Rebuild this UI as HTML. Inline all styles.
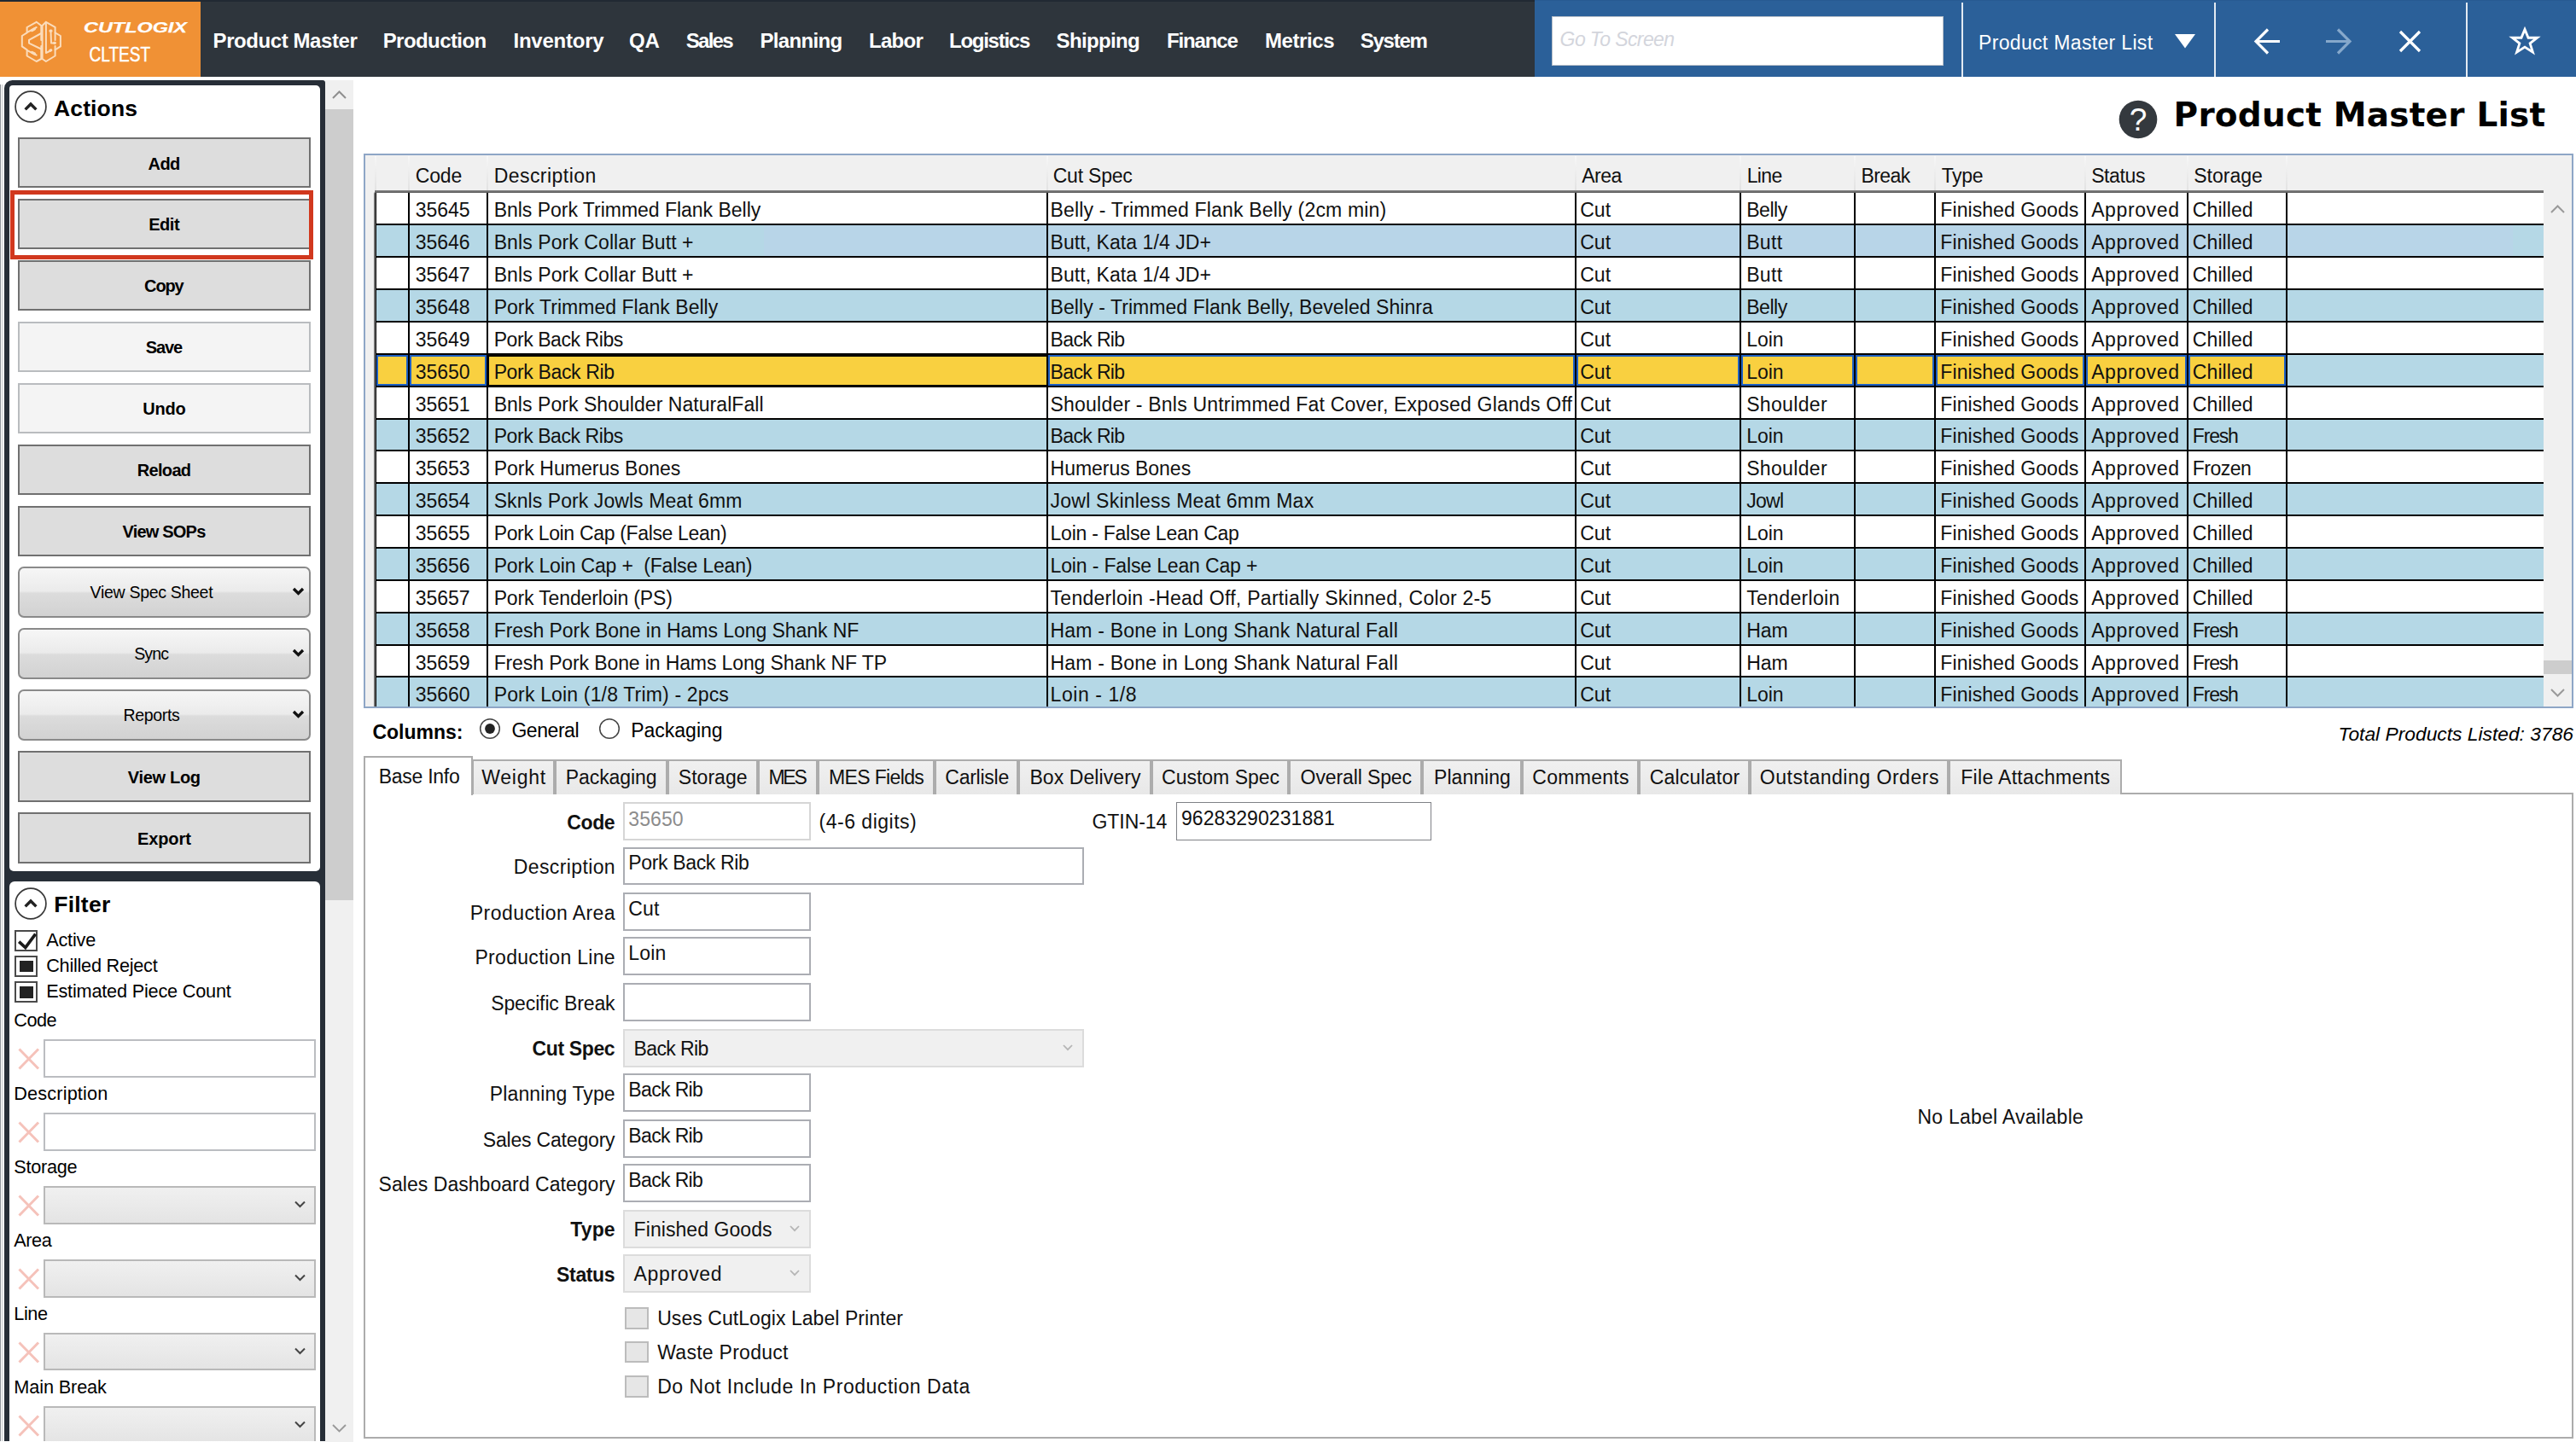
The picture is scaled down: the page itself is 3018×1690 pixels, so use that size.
<!DOCTYPE html>
<html lang="en"><head><meta charset="utf-8"><title>Product Master List</title>
<style>
html,body{margin:0;padding:0;background:#fff;}
body{width:3018px;height:1690px;overflow:hidden;position:relative;font-family:"Liberation Sans", sans-serif;font-size:23px;color:#000;}
div{position:absolute;box-sizing:border-box;white-space:pre;}
svg{position:absolute;overflow:visible;}

.nav{color:#fff;font-weight:bold;font-size:24px;line-height:24px;}
.btn{background:#ddd;border:2px solid #707070;text-align:center;font-weight:bold;font-size:20px;}
.btn.dis{background:#f4f4f4;border-color:#b9bcbf;}
.dd{border:2px solid #8a8a8a;border-radius:7px;background:linear-gradient(#f6f6f6 0%,#ebebeb 48%,#dcdcdc 52%,#d2d2d2 100%);}
.tb{background:#fff;border:2px solid #abadb3;}
.cb{background:linear-gradient(#efefef,#e4e4e4);border:2px solid #acacac;}
.tab{background:linear-gradient(#f0f0f0,#e8e8e8);border:2px solid #acacac;border-bottom:none;}

</style></head><body>
<div style="left:0.00px;top:0.00px;width:3018.00px;height:90.00px;background:#2e353c;"></div><div style="left:0.00px;top:0.00px;width:1797.50px;height:1.70px;background:#212933;"></div><div style="left:0.00px;top:1.90px;width:234.60px;height:88.00px;background:#f09135;"></div><div style="left:1797.50px;top:0.00px;width:1220.50px;height:90.00px;background:#2b6099;"></div><div style="left:1797.50px;top:0.00px;width:1220.50px;height:1.20px;background:#275a92;"></div><svg style="left:24.5px;top:24.5px" width="47" height="48" viewBox="0 0 47 48" fill="none" stroke="#fbdcbb" stroke-width="2" stroke-linejoin="round" stroke-linecap="round">
<path d="M17.7 0.8 L6.6 7 L6.6 13.3 L0.8 17 L0.8 29.4 L6.6 33.3 L6.6 40.5 L17.7 47 L23.3 44 L23.3 29 M23.3 22 L23.3 5 L17.7 0.8"/>
<path d="M17.7 7 L7 12.8 M23.3 14 L9 21.8 L9 25.6 L23.3 32.5 M7 34.2 L17.7 39.6"/>
<path d="M15.5 8.8 L12.5 10.6 M15.5 38 L12.5 36.4" stroke-width="3.2"/>
<path d="M28.9 0.8 L39.6 6.8 L39.6 13.3 L45.9 17 L45.9 29.4 L39.6 33.3 L39.6 40.5 L28.9 47 L24.6 44 L24.6 5 L28.9 0.8"/>
<path d="M28.9 2.5 L28.9 37 L34.5 34.3 M34.5 11.5 L35 25.5 L39 25.5 M39.6 13.3 L39.6 22 M39.6 29 L39.6 33.3"/>
<path d="M34 11.2 L35 11.2 M38.6 25.3 L39.4 25.3 M33.8 34.2 L34.8 33.8" stroke-width="3.2"/>
</svg><svg style="left:0;top:0" width="240" height="90"><text x="98" y="38" fill="#fff" font-family="Liberation Sans, sans-serif" font-weight="bold" font-style="italic" font-size="17.4" stroke="#fff" stroke-width="0.25" textLength="121" lengthAdjust="spacingAndGlyphs">CUTLOGIX</text>
<text x="104.6" y="72.3" fill="#fff" font-family="Liberation Sans, sans-serif" font-size="24.3" stroke="#fff" stroke-width="0.5" textLength="71.5" lengthAdjust="spacingAndGlyphs">CLTEST</text></svg><div style="top:35.98px;font-size:24px;line-height:24px;color:#fff;font-weight:bold;letter-spacing:-0.423px;left:249.60px;">Product Master</div><div style="top:35.98px;font-size:24px;line-height:24px;color:#fff;font-weight:bold;letter-spacing:-0.573px;left:448.70px;">Production</div><div style="top:35.98px;font-size:24px;line-height:24px;color:#fff;font-weight:bold;letter-spacing:-0.241px;left:601.50px;">Inventory</div><div style="top:35.98px;font-size:24px;line-height:24px;color:#fff;font-weight:bold;letter-spacing:-0.2px;left:737.00px;">QA</div><div style="top:35.98px;font-size:24px;line-height:24px;color:#fff;font-weight:bold;letter-spacing:-1.705px;left:803.70px;">Sales</div><div style="top:35.98px;font-size:24px;line-height:24px;color:#fff;font-weight:bold;letter-spacing:-0.635px;left:890.40px;">Planning</div><div style="top:35.98px;font-size:24px;line-height:24px;color:#fff;font-weight:bold;letter-spacing:-0.718px;left:1018.00px;">Labor</div><div style="top:35.98px;font-size:24px;line-height:24px;color:#fff;font-weight:bold;letter-spacing:-1.257px;left:1112.00px;">Logistics</div><div style="top:35.98px;font-size:24px;line-height:24px;color:#fff;font-weight:bold;letter-spacing:-0.665px;left:1237.60px;">Shipping</div><div style="top:35.98px;font-size:24px;line-height:24px;color:#fff;font-weight:bold;letter-spacing:-1.151px;left:1367.00px;">Finance</div><div style="top:35.98px;font-size:24px;line-height:24px;color:#fff;font-weight:bold;letter-spacing:-0.424px;left:1482.00px;">Metrics</div><div style="top:35.98px;font-size:24px;line-height:24px;color:#fff;font-weight:bold;letter-spacing:-1.278px;left:1593.80px;">System</div><div style="left:1818.20px;top:18.70px;width:459.20px;height:58.60px;background:#fff;border:1px solid #b9c0c9;"></div><div style="top:34.83px;font-size:23px;line-height:23px;color:#d3d5dc;letter-spacing:-0.598px;left:1827.60px;font-style:italic;">Go To Screen</div><div style="left:2298.30px;top:2.50px;width:2.00px;height:87.50px;background:#e3eaf2;"></div><div style="left:2593.60px;top:2.50px;width:2.00px;height:87.50px;background:#e3eaf2;"></div><div style="left:2889.40px;top:2.50px;width:2.00px;height:87.50px;background:#e3eaf2;"></div><div style="top:39.13px;font-size:23px;line-height:23px;color:#fff;letter-spacing:0.33px;left:2318.00px;">Product Master List</div><svg style="left:2548px;top:40.2px" width="24" height="17"><path d="M0 0H24L12 16.5Z" fill="#fff"/></svg><svg style="left:2640px;top:33px" width="32" height="32" fill="none" stroke="#fff" stroke-width="3.2"><path d="M31 15.5H3M17 1.5L3 15.5L17 29.5"/></svg><svg style="left:2724px;top:33px" width="32" height="32" fill="none" stroke="#86a8cb" stroke-width="3.2"><path d="M1 15.5H29M15 1.5L29 15.5L15 29.5"/></svg><svg style="left:2811px;top:36px" width="25" height="25" fill="none" stroke="#fff" stroke-width="3.2"><path d="M1 1L24 24M24 1L1 24"/></svg><svg style="left:2940.5px;top:32px" width="34" height="32" viewBox="0 0 36 34" fill="none" stroke="#fff" stroke-width="3"><path d="M18 2.5L22.3 13H33.5L24.5 20L28 31L18 24.5L8 31L11.5 20L2.5 13H13.7Z" stroke-linejoin="miter"/></svg><div style="left:0.00px;top:99.00px;width:0.80px;height:1600.00px;background:#8d9297;"></div><div style="left:1.90px;top:99.00px;width:0.90px;height:1600.00px;background:#c4c6c8;"></div><div style="left:4.60px;top:94.20px;width:376.00px;height:1620.00px;background:#272e37;border-radius:9.5px 3px 0 0;"></div><div style="left:10.50px;top:100.40px;width:364.00px;height:921.00px;background:#fff;border-radius:4px 5px 5px 5px;"></div><div style="left:10.50px;top:1033.30px;width:364.00px;height:700.00px;background:#fff;border-radius:6px 6px 0 0;"></div><div style="left:380.50px;top:94.00px;width:33.50px;height:1596.00px;background:#f0f0f0;"></div><div style="left:380.50px;top:128.00px;width:33.50px;height:927.00px;background:#cdcdcd;"></div><svg style="left:389px;top:106px" width="17" height="10" fill="none" stroke="#8f8f8f" stroke-width="2"><path d="M1 9L8.5 1.5L16 9"/></svg><svg style="left:389px;top:1669px" width="17" height="10" fill="none" stroke="#9a9a9a" stroke-width="1.9"><path d="M1 1L8.5 8.5L16 1"/></svg><svg style="left:15.5px;top:105.1px" width="40" height="40" fill="none"><circle cx="20" cy="20" r="17.9" stroke="#383838" stroke-width="1.7" fill="#fff"/><path d="M13.6 23.4L20 17L26.4 23.4" stroke="#222" stroke-width="3.4"/></svg><div style="top:113.57px;font-size:26.5px;line-height:26.5px;color:#000;font-weight:bold;letter-spacing:0.135px;left:63.00px;">Actions</div><svg style="left:15.5px;top:1038.8px" width="40" height="40" fill="none"><circle cx="20" cy="20" r="17.9" stroke="#383838" stroke-width="1.7" fill="#fff"/><path d="M13.6 23.4L20 17L26.4 23.4" stroke="#222" stroke-width="3.4"/></svg><div style="top:1047.27px;font-size:26.5px;line-height:26.5px;color:#000;font-weight:bold;letter-spacing:0.221px;left:63.30px;">Filter</div><div class="btn" style="left:20.60px;top:161.00px;width:343.50px;height:59.40px;"></div><div style="top:181.57px;font-size:20px;line-height:20px;color:#000;font-weight:bold;letter-spacing:-0.495px;left:173.45px;">Add</div><div class="btn" style="left:20.60px;top:232.92px;width:343.50px;height:59.40px;"></div><div style="top:253.49px;font-size:20px;line-height:20px;color:#000;font-weight:bold;letter-spacing:-0.494px;left:174.25px;">Edit</div><div class="btn" style="left:20.60px;top:304.84px;width:343.50px;height:59.40px;"></div><div style="top:325.41px;font-size:20px;line-height:20px;color:#000;font-weight:bold;letter-spacing:-1.133px;left:169.10px;">Copy</div><div class="btn dis" style="left:20.60px;top:376.76px;width:343.50px;height:59.40px;"></div><div style="top:397.33px;font-size:20px;line-height:20px;color:#000;font-weight:bold;letter-spacing:-1.073px;left:170.65px;">Save</div><div class="btn dis" style="left:20.60px;top:448.68px;width:343.50px;height:59.40px;"></div><div style="top:469.25px;font-size:20px;line-height:20px;color:#000;font-weight:bold;letter-spacing:-0.198px;left:167.15px;">Undo</div><div class="btn" style="left:20.60px;top:520.60px;width:343.50px;height:59.40px;"></div><div style="top:541.17px;font-size:20px;line-height:20px;color:#000;font-weight:bold;letter-spacing:-0.678px;left:160.75px;">Reload</div><div class="btn" style="left:20.60px;top:592.52px;width:343.50px;height:59.40px;"></div><div style="top:613.09px;font-size:20px;line-height:20px;color:#000;font-weight:bold;letter-spacing:-0.793px;left:143.50px;">View SOPs</div><div class="dd" style="left:20.60px;top:664.44px;width:343.50px;height:59.40px;"></div><div style="top:685.23px;font-size:19.5px;line-height:19.5px;color:#000;letter-spacing:-0.297px;left:105.60px;">View Spec Sheet</div><svg style="left:343.2px;top:689.4px" width="13" height="9" fill="none" stroke="#111" stroke-width="3.3"><path d="M1 1L6.5 6.5L12 1"/></svg><div class="dd" style="left:20.60px;top:736.36px;width:343.50px;height:59.40px;"></div><div style="top:757.15px;font-size:19.5px;line-height:19.5px;color:#000;letter-spacing:-0.853px;left:157.20px;">Sync</div><svg style="left:343.2px;top:761.4px" width="13" height="9" fill="none" stroke="#111" stroke-width="3.3"><path d="M1 1L6.5 6.5L12 1"/></svg><div class="dd" style="left:20.60px;top:808.28px;width:343.50px;height:59.40px;"></div><div style="top:829.07px;font-size:19.5px;line-height:19.5px;color:#000;letter-spacing:-0.314px;left:144.40px;">Reports</div><svg style="left:343.2px;top:833.3px" width="13" height="9" fill="none" stroke="#111" stroke-width="3.3"><path d="M1 1L6.5 6.5L12 1"/></svg><div class="btn" style="left:20.60px;top:880.20px;width:343.50px;height:59.40px;"></div><div style="top:900.77px;font-size:20px;line-height:20px;color:#000;font-weight:bold;letter-spacing:-0.289px;left:149.70px;">View Log</div><div class="btn" style="left:20.60px;top:952.12px;width:343.50px;height:59.40px;"></div><div style="top:972.69px;font-size:20px;line-height:20px;color:#000;font-weight:bold;letter-spacing:-0.089px;left:160.95px;">Export</div><div style="left:12.10px;top:223.00px;width:355.10px;height:80.70px;border:5px solid #d1381e;"></div><div style="left:16.50px;top:1090.00px;width:27.70px;height:25.20px;background:#fff;border:2px solid #4a4a4a;"></div><svg style="left:16.5px;top:1090px" width="28" height="26" fill="none" stroke="#1a1a1a" stroke-width="3.6"><path d="M5.2 13.6L12.8 20.6L24.6 4.6"/></svg><div style="top:1091.23px;font-size:21.7px;line-height:21.7px;color:#000;letter-spacing:-0.192px;left:54.20px;">Active</div><div style="left:16.50px;top:1120.00px;width:27.70px;height:25.20px;background:#fff;border:2px solid #4a4a4a;"></div><div style="left:22.50px;top:1125.60px;width:16.00px;height:13.80px;background:#222;"></div><div style="top:1121.03px;font-size:21.7px;line-height:21.7px;color:#000;letter-spacing:-0.255px;left:54.20px;">Chilled Reject</div><div style="left:16.50px;top:1150.20px;width:27.70px;height:25.20px;background:#fff;border:2px solid #4a4a4a;"></div><div style="left:22.50px;top:1155.80px;width:16.00px;height:13.80px;background:#222;"></div><div style="top:1150.93px;font-size:21.7px;line-height:21.7px;color:#000;letter-spacing:-0.2px;left:54.20px;">Estimated Piece Count</div><div style="top:1185.23px;font-size:21.7px;line-height:21.7px;color:#000;letter-spacing:-0.553px;left:16.30px;">Code</div><svg style="left:21.2px;top:1228.4px" width="26" height="26" fill="none" stroke="#f5c2ba" stroke-width="3"><path d="M1.5 1.5L24 24.5M24 1.5L1.5 24.5"/></svg><div style="left:50.60px;top:1218.00px;width:319.60px;height:44.90px;background:#fff;border:2px solid #bbbdc1;"></div><div style="top:1271.13px;font-size:21.7px;line-height:21.7px;color:#000;letter-spacing:0.152px;left:16.30px;">Description</div><svg style="left:21.2px;top:1314.3px" width="26" height="26" fill="none" stroke="#f5c2ba" stroke-width="3"><path d="M1.5 1.5L24 24.5M24 1.5L1.5 24.5"/></svg><div style="left:50.60px;top:1303.90px;width:319.60px;height:44.90px;background:#fff;border:2px solid #bbbdc1;"></div><div style="top:1357.03px;font-size:21.7px;line-height:21.7px;color:#000;letter-spacing:-0.295px;left:16.30px;">Storage</div><svg style="left:21.2px;top:1400.2px" width="26" height="26" fill="none" stroke="#f5c2ba" stroke-width="3"><path d="M1.5 1.5L24 24.5M24 1.5L1.5 24.5"/></svg><div style="left:50.60px;top:1389.80px;width:319.60px;height:44.90px;background:linear-gradient(#f0f0f0,#e4e4e4);border:2px solid #b9b9b9;"></div><svg style="left:345px;top:1407.3px" width="13" height="9" fill="none" stroke="#444" stroke-width="2"><path d="M1 1.5L6.5 7L12 1.5"/></svg><div style="top:1442.93px;font-size:21.7px;line-height:21.7px;color:#000;letter-spacing:-0.438px;left:16.30px;">Area</div><svg style="left:21.2px;top:1486.1px" width="26" height="26" fill="none" stroke="#f5c2ba" stroke-width="3"><path d="M1.5 1.5L24 24.5M24 1.5L1.5 24.5"/></svg><div style="left:50.60px;top:1475.70px;width:319.60px;height:44.90px;background:linear-gradient(#f0f0f0,#e4e4e4);border:2px solid #b9b9b9;"></div><svg style="left:345px;top:1493.2px" width="13" height="9" fill="none" stroke="#444" stroke-width="2"><path d="M1 1.5L6.5 7L12 1.5"/></svg><div style="top:1528.83px;font-size:21.7px;line-height:21.7px;color:#000;letter-spacing:-0.439px;left:16.30px;">Line</div><svg style="left:21.2px;top:1572.0px" width="26" height="26" fill="none" stroke="#f5c2ba" stroke-width="3"><path d="M1.5 1.5L24 24.5M24 1.5L1.5 24.5"/></svg><div style="left:50.60px;top:1561.60px;width:319.60px;height:44.90px;background:linear-gradient(#f0f0f0,#e4e4e4);border:2px solid #b9b9b9;"></div><svg style="left:345px;top:1579.1px" width="13" height="9" fill="none" stroke="#444" stroke-width="2"><path d="M1 1.5L6.5 7L12 1.5"/></svg><div style="top:1614.73px;font-size:21.7px;line-height:21.7px;color:#000;letter-spacing:-0.121px;left:16.30px;">Main Break</div><svg style="left:21.2px;top:1657.9px" width="26" height="26" fill="none" stroke="#f5c2ba" stroke-width="3"><path d="M1.5 1.5L24 24.5M24 1.5L1.5 24.5"/></svg><div style="left:50.60px;top:1647.50px;width:319.60px;height:44.90px;background:linear-gradient(#f0f0f0,#e4e4e4);border:2px solid #b9b9b9;"></div><svg style="left:345px;top:1665.0px" width="13" height="9" fill="none" stroke="#444" stroke-width="2"><path d="M1 1.5L6.5 7L12 1.5"/></svg><svg style="left:2482px;top:116.5px" width="46" height="46"><circle cx="23" cy="23" r="22.3" fill="#34393e"/></svg><div style="top:122.28px;font-size:37px;line-height:37px;color:#fff;left:2005.00px;width:1000px;text-align:center;">?</div><div style="top:114.99px;font-size:39px;line-height:39px;color:#000;font-weight:bold;letter-spacing:0.2px;left:2546.60px;font-family:'DejaVu Sans','Liberation Sans',sans-serif;">Product Master List</div><div style="left:426.40px;top:180.30px;width:2588.20px;height:649.30px;background:#fff;border:2px solid #8ea6c6;"></div><div style="left:428.40px;top:182.30px;width:2584.20px;height:41.00px;background:#f0f0f0;"></div><div style="left:428.40px;top:182.30px;width:10.00px;height:645.30px;background:#f0f0f0;"></div><div style="left:439.35px;top:183.30px;width:2.00px;height:40.00px;background:linear-gradient(#f7f7f7,#e2e2e2);"></div><div style="left:478.35px;top:183.30px;width:2.00px;height:40.00px;background:linear-gradient(#f7f7f7,#e2e2e2);"></div><div style="top:195.43px;font-size:23px;line-height:23px;color:#111;letter-spacing:-0.095px;left:486.65px;">Code</div><div style="left:570.35px;top:183.30px;width:2.00px;height:40.00px;background:linear-gradient(#f7f7f7,#e2e2e2);"></div><div style="top:195.43px;font-size:23px;line-height:23px;color:#111;letter-spacing:0.455px;left:578.65px;">Description</div><div style="left:1226.35px;top:183.30px;width:2.00px;height:40.00px;background:linear-gradient(#f7f7f7,#e2e2e2);"></div><div style="top:195.43px;font-size:23px;line-height:23px;color:#111;letter-spacing:-0.201px;left:1233.65px;">Cut Spec</div><div style="left:1844.85px;top:183.30px;width:2.00px;height:40.00px;background:linear-gradient(#f7f7f7,#e2e2e2);"></div><div style="top:195.43px;font-size:23px;line-height:23px;color:#111;letter-spacing:-0.465px;left:1853.15px;">Area</div><div style="left:2038.35px;top:183.30px;width:2.00px;height:40.00px;background:linear-gradient(#f7f7f7,#e2e2e2);"></div><div style="top:195.43px;font-size:23px;line-height:23px;color:#111;letter-spacing:-0.628px;left:2046.65px;">Line</div><div style="left:2172.15px;top:183.30px;width:2.00px;height:40.00px;background:linear-gradient(#f7f7f7,#e2e2e2);"></div><div style="top:195.43px;font-size:23px;line-height:23px;color:#111;letter-spacing:-0.548px;left:2180.45px;">Break</div><div style="left:2266.35px;top:183.30px;width:2.00px;height:40.00px;background:linear-gradient(#f7f7f7,#e2e2e2);"></div><div style="top:195.43px;font-size:23px;line-height:23px;color:#111;letter-spacing:-0.325px;left:2274.65px;">Type</div><div style="left:2441.85px;top:183.30px;width:2.00px;height:40.00px;background:linear-gradient(#f7f7f7,#e2e2e2);"></div><div style="top:195.43px;font-size:23px;line-height:23px;color:#111;letter-spacing:-0.384px;left:2450.15px;">Status</div><div style="left:2561.85px;top:183.30px;width:2.00px;height:40.00px;background:linear-gradient(#f7f7f7,#e2e2e2);"></div><div style="top:195.43px;font-size:23px;line-height:23px;color:#111;letter-spacing:0.023px;left:2570.15px;">Storage</div><div style="left:2677.65px;top:183.30px;width:2.00px;height:40.00px;background:linear-gradient(#f7f7f7,#e2e2e2);"></div><div style="left:439.00px;top:222.70px;width:2540.80px;height:3.30px;background:linear-gradient(#8a8a8a,#555);"></div><div style="left:440.00px;top:225.50px;width:2539.80px;height:37.00px;background:#fff;"></div><div style="left:440.00px;top:262.00px;width:2539.80px;height:2.00px;background:#000;"></div><div style="top:235.33px;font-size:23px;line-height:23px;color:#111;left:486.65px;">35645</div><div style="top:235.33px;font-size:23px;line-height:23px;color:#111;letter-spacing:-0.019px;left:578.65px;">Bnls Pork Trimmed Flank Belly</div><div style="top:235.33px;font-size:23px;line-height:23px;color:#111;letter-spacing:0.18px;left:1230.55px;">Belly - Trimmed Flank Belly (2cm min)</div><div style="top:235.33px;font-size:23px;line-height:23px;color:#111;letter-spacing:0.102px;left:1851.15px;">Cut</div><div style="top:235.33px;font-size:23px;line-height:23px;color:#111;letter-spacing:-0.44px;left:2046.15px;">Belly</div><div style="top:235.33px;font-size:23px;line-height:23px;color:#111;letter-spacing:0.07px;left:2273.35px;">Finished Goods</div><div style="top:235.33px;font-size:23px;line-height:23px;color:#111;letter-spacing:0.619px;left:2450.15px;">Approved</div><div style="top:235.33px;font-size:23px;line-height:23px;color:#111;letter-spacing:0.079px;left:2568.85px;">Chilled</div><div style="left:440.00px;top:263.50px;width:2539.80px;height:37.00px;background:#b5d8e6;"></div><div style="left:895.00px;top:263.50px;width:2049.00px;height:37.00px;background:#b8d5e8;"></div><div style="left:440.00px;top:300.00px;width:2539.80px;height:2.00px;background:#000;"></div><div style="top:273.20px;font-size:23px;line-height:23px;color:#111;left:486.65px;">35646</div><div style="top:273.20px;font-size:23px;line-height:23px;color:#111;letter-spacing:0.086px;left:578.65px;">Bnls Pork Collar Butt +</div><div style="top:273.20px;font-size:23px;line-height:23px;color:#111;letter-spacing:0.058px;left:1230.55px;">Butt, Kata 1/4 JD+</div><div style="top:273.20px;font-size:23px;line-height:23px;color:#111;letter-spacing:0.102px;left:1851.15px;">Cut</div><div style="top:273.20px;font-size:23px;line-height:23px;color:#111;letter-spacing:0.393px;left:2046.15px;">Butt</div><div style="top:273.20px;font-size:23px;line-height:23px;color:#111;letter-spacing:0.07px;left:2273.35px;">Finished Goods</div><div style="top:273.20px;font-size:23px;line-height:23px;color:#111;letter-spacing:0.619px;left:2450.15px;">Approved</div><div style="top:273.20px;font-size:23px;line-height:23px;color:#111;letter-spacing:0.079px;left:2568.85px;">Chilled</div><div style="left:440.00px;top:301.50px;width:2539.80px;height:37.00px;background:#fff;"></div><div style="left:440.00px;top:338.00px;width:2539.80px;height:2.00px;background:#000;"></div><div style="top:311.07px;font-size:23px;line-height:23px;color:#111;left:486.65px;">35647</div><div style="top:311.07px;font-size:23px;line-height:23px;color:#111;letter-spacing:0.086px;left:578.65px;">Bnls Pork Collar Butt +</div><div style="top:311.07px;font-size:23px;line-height:23px;color:#111;letter-spacing:0.058px;left:1230.55px;">Butt, Kata 1/4 JD+</div><div style="top:311.07px;font-size:23px;line-height:23px;color:#111;letter-spacing:0.102px;left:1851.15px;">Cut</div><div style="top:311.07px;font-size:23px;line-height:23px;color:#111;letter-spacing:0.393px;left:2046.15px;">Butt</div><div style="top:311.07px;font-size:23px;line-height:23px;color:#111;letter-spacing:0.07px;left:2273.35px;">Finished Goods</div><div style="top:311.07px;font-size:23px;line-height:23px;color:#111;letter-spacing:0.619px;left:2450.15px;">Approved</div><div style="top:311.07px;font-size:23px;line-height:23px;color:#111;letter-spacing:0.079px;left:2568.85px;">Chilled</div><div style="left:440.00px;top:339.50px;width:2539.80px;height:37.00px;background:#b5d8e6;"></div><div style="left:440.00px;top:376.00px;width:2539.80px;height:2.00px;background:#000;"></div><div style="top:348.94px;font-size:23px;line-height:23px;color:#111;left:486.65px;">35648</div><div style="top:348.94px;font-size:23px;line-height:23px;color:#111;letter-spacing:0.025px;left:578.65px;">Pork Trimmed Flank Belly</div><div style="top:348.94px;font-size:23px;line-height:23px;color:#111;letter-spacing:0.062px;left:1230.55px;">Belly - Trimmed Flank Belly, Beveled Shinra</div><div style="top:348.94px;font-size:23px;line-height:23px;color:#111;letter-spacing:0.102px;left:1851.15px;">Cut</div><div style="top:348.94px;font-size:23px;line-height:23px;color:#111;letter-spacing:-0.44px;left:2046.15px;">Belly</div><div style="top:348.94px;font-size:23px;line-height:23px;color:#111;letter-spacing:0.07px;left:2273.35px;">Finished Goods</div><div style="top:348.94px;font-size:23px;line-height:23px;color:#111;letter-spacing:0.619px;left:2450.15px;">Approved</div><div style="top:348.94px;font-size:23px;line-height:23px;color:#111;letter-spacing:0.079px;left:2568.85px;">Chilled</div><div style="left:440.00px;top:377.50px;width:2539.80px;height:37.00px;background:#fff;"></div><div style="left:440.00px;top:414.00px;width:2539.80px;height:2.00px;background:#000;"></div><div style="top:386.81px;font-size:23px;line-height:23px;color:#111;left:486.65px;">35649</div><div style="top:386.81px;font-size:23px;line-height:23px;color:#111;letter-spacing:-0.425px;left:578.65px;">Pork Back Ribs</div><div style="top:386.81px;font-size:23px;line-height:23px;color:#111;letter-spacing:-0.635px;left:1230.55px;">Back Rib</div><div style="top:386.81px;font-size:23px;line-height:23px;color:#111;letter-spacing:0.102px;left:1851.15px;">Cut</div><div style="top:386.81px;font-size:23px;line-height:23px;color:#111;letter-spacing:-0.028px;left:2046.15px;">Loin</div><div style="top:386.81px;font-size:23px;line-height:23px;color:#111;letter-spacing:0.07px;left:2273.35px;">Finished Goods</div><div style="top:386.81px;font-size:23px;line-height:23px;color:#111;letter-spacing:0.619px;left:2450.15px;">Approved</div><div style="top:386.81px;font-size:23px;line-height:23px;color:#111;letter-spacing:0.079px;left:2568.85px;">Chilled</div><div style="left:440.00px;top:415.50px;width:2539.80px;height:37.00px;background:#b5d8e6;"></div><div style="left:440.00px;top:415.50px;width:2238.65px;height:37.00px;background:#f9d040;"></div><div style="left:440.00px;top:452.00px;width:2539.80px;height:2.00px;background:#000;"></div><div style="top:424.68px;font-size:23px;line-height:23px;color:#111;left:486.65px;">35650</div><div style="top:424.68px;font-size:23px;line-height:23px;color:#111;letter-spacing:-0.368px;left:578.65px;">Pork Back Rib</div><div style="top:424.68px;font-size:23px;line-height:23px;color:#111;letter-spacing:-0.635px;left:1230.55px;">Back Rib</div><div style="top:424.68px;font-size:23px;line-height:23px;color:#111;letter-spacing:0.102px;left:1851.15px;">Cut</div><div style="top:424.68px;font-size:23px;line-height:23px;color:#111;letter-spacing:-0.028px;left:2046.15px;">Loin</div><div style="top:424.68px;font-size:23px;line-height:23px;color:#111;letter-spacing:0.07px;left:2273.35px;">Finished Goods</div><div style="top:424.68px;font-size:23px;line-height:23px;color:#111;letter-spacing:0.619px;left:2450.15px;">Approved</div><div style="top:424.68px;font-size:23px;line-height:23px;color:#111;letter-spacing:0.079px;left:2568.85px;">Chilled</div><div style="left:440.00px;top:453.50px;width:2539.80px;height:37.00px;background:#fff;"></div><div style="left:440.00px;top:490.00px;width:2539.80px;height:2.00px;background:#000;"></div><div style="top:462.55px;font-size:23px;line-height:23px;color:#111;left:486.65px;">35651</div><div style="top:462.55px;font-size:23px;line-height:23px;color:#111;letter-spacing:0.049px;left:578.65px;">Bnls Pork Shoulder NaturalFall</div><div style="top:462.55px;font-size:23px;line-height:23px;color:#111;letter-spacing:0.204px;left:1230.55px;">Shoulder - Bnls Untrimmed Fat Cover, Exposed Glands Off</div><div style="top:462.55px;font-size:23px;line-height:23px;color:#111;letter-spacing:0.102px;left:1851.15px;">Cut</div><div style="top:462.55px;font-size:23px;line-height:23px;color:#111;letter-spacing:0.346px;left:2046.15px;">Shoulder</div><div style="top:462.55px;font-size:23px;line-height:23px;color:#111;letter-spacing:0.07px;left:2273.35px;">Finished Goods</div><div style="top:462.55px;font-size:23px;line-height:23px;color:#111;letter-spacing:0.619px;left:2450.15px;">Approved</div><div style="top:462.55px;font-size:23px;line-height:23px;color:#111;letter-spacing:0.079px;left:2568.85px;">Chilled</div><div style="left:440.00px;top:491.50px;width:2539.80px;height:36.00px;background:#b5d8e6;"></div><div style="left:440.00px;top:527.00px;width:2539.80px;height:2.00px;background:#000;"></div><div style="top:500.42px;font-size:23px;line-height:23px;color:#111;left:486.65px;">35652</div><div style="top:500.42px;font-size:23px;line-height:23px;color:#111;letter-spacing:-0.425px;left:578.65px;">Pork Back Ribs</div><div style="top:500.42px;font-size:23px;line-height:23px;color:#111;letter-spacing:-0.635px;left:1230.55px;">Back Rib</div><div style="top:500.42px;font-size:23px;line-height:23px;color:#111;letter-spacing:0.102px;left:1851.15px;">Cut</div><div style="top:500.42px;font-size:23px;line-height:23px;color:#111;letter-spacing:-0.028px;left:2046.15px;">Loin</div><div style="top:500.42px;font-size:23px;line-height:23px;color:#111;letter-spacing:0.07px;left:2273.35px;">Finished Goods</div><div style="top:500.42px;font-size:23px;line-height:23px;color:#111;letter-spacing:0.619px;left:2450.15px;">Approved</div><div style="top:500.42px;font-size:23px;line-height:23px;color:#111;letter-spacing:-1.199px;left:2568.85px;">Fresh</div><div style="left:440.00px;top:528.50px;width:2539.80px;height:37.00px;background:#fff;"></div><div style="left:440.00px;top:565.00px;width:2539.80px;height:2.00px;background:#000;"></div><div style="top:538.29px;font-size:23px;line-height:23px;color:#111;left:486.65px;">35653</div><div style="top:538.29px;font-size:23px;line-height:23px;color:#111;letter-spacing:0.006px;left:578.65px;">Pork Humerus Bones</div><div style="top:538.29px;font-size:23px;line-height:23px;color:#111;letter-spacing:-0.027px;left:1230.55px;">Humerus Bones</div><div style="top:538.29px;font-size:23px;line-height:23px;color:#111;letter-spacing:0.102px;left:1851.15px;">Cut</div><div style="top:538.29px;font-size:23px;line-height:23px;color:#111;letter-spacing:0.346px;left:2046.15px;">Shoulder</div><div style="top:538.29px;font-size:23px;line-height:23px;color:#111;letter-spacing:0.07px;left:2273.35px;">Finished Goods</div><div style="top:538.29px;font-size:23px;line-height:23px;color:#111;letter-spacing:0.619px;left:2450.15px;">Approved</div><div style="top:538.29px;font-size:23px;line-height:23px;color:#111;letter-spacing:-0.519px;left:2568.85px;">Frozen</div><div style="left:440.00px;top:566.50px;width:2539.80px;height:37.00px;background:#b5d8e6;"></div><div style="left:440.00px;top:603.00px;width:2539.80px;height:2.00px;background:#000;"></div><div style="top:576.16px;font-size:23px;line-height:23px;color:#111;left:486.65px;">35654</div><div style="top:576.16px;font-size:23px;line-height:23px;color:#111;letter-spacing:0.077px;left:578.65px;">Sknls Pork Jowls Meat 6mm</div><div style="top:576.16px;font-size:23px;line-height:23px;color:#111;letter-spacing:0.227px;left:1230.55px;">Jowl Skinless Meat 6mm Max</div><div style="top:576.16px;font-size:23px;line-height:23px;color:#111;letter-spacing:0.102px;left:1851.15px;">Cut</div><div style="top:576.16px;font-size:23px;line-height:23px;color:#111;letter-spacing:-0.672px;left:2046.15px;">Jowl</div><div style="top:576.16px;font-size:23px;line-height:23px;color:#111;letter-spacing:0.07px;left:2273.35px;">Finished Goods</div><div style="top:576.16px;font-size:23px;line-height:23px;color:#111;letter-spacing:0.619px;left:2450.15px;">Approved</div><div style="top:576.16px;font-size:23px;line-height:23px;color:#111;letter-spacing:0.079px;left:2568.85px;">Chilled</div><div style="left:440.00px;top:604.50px;width:2539.80px;height:37.00px;background:#fff;"></div><div style="left:440.00px;top:641.00px;width:2539.80px;height:2.00px;background:#000;"></div><div style="top:614.03px;font-size:23px;line-height:23px;color:#111;left:486.65px;">35655</div><div style="top:614.03px;font-size:23px;line-height:23px;color:#111;letter-spacing:-0.331px;left:578.65px;">Pork Loin Cap (False Lean)</div><div style="top:614.03px;font-size:23px;line-height:23px;color:#111;letter-spacing:-0.251px;left:1230.55px;">Loin - False Lean Cap</div><div style="top:614.03px;font-size:23px;line-height:23px;color:#111;letter-spacing:0.102px;left:1851.15px;">Cut</div><div style="top:614.03px;font-size:23px;line-height:23px;color:#111;letter-spacing:-0.028px;left:2046.15px;">Loin</div><div style="top:614.03px;font-size:23px;line-height:23px;color:#111;letter-spacing:0.07px;left:2273.35px;">Finished Goods</div><div style="top:614.03px;font-size:23px;line-height:23px;color:#111;letter-spacing:0.619px;left:2450.15px;">Approved</div><div style="top:614.03px;font-size:23px;line-height:23px;color:#111;letter-spacing:0.079px;left:2568.85px;">Chilled</div><div style="left:440.00px;top:642.50px;width:2539.80px;height:37.00px;background:#b5d8e6;"></div><div style="left:440.00px;top:679.00px;width:2539.80px;height:2.00px;background:#000;"></div><div style="top:651.90px;font-size:23px;line-height:23px;color:#111;left:486.65px;">35656</div><div style="top:651.90px;font-size:23px;line-height:23px;color:#111;letter-spacing:-0.167px;left:578.65px;">Pork Loin Cap +  (False Lean)</div><div style="top:651.90px;font-size:23px;line-height:23px;color:#111;letter-spacing:-0.152px;left:1230.55px;">Loin - False Lean Cap +</div><div style="top:651.90px;font-size:23px;line-height:23px;color:#111;letter-spacing:0.102px;left:1851.15px;">Cut</div><div style="top:651.90px;font-size:23px;line-height:23px;color:#111;letter-spacing:-0.028px;left:2046.15px;">Loin</div><div style="top:651.90px;font-size:23px;line-height:23px;color:#111;letter-spacing:0.07px;left:2273.35px;">Finished Goods</div><div style="top:651.90px;font-size:23px;line-height:23px;color:#111;letter-spacing:0.619px;left:2450.15px;">Approved</div><div style="top:651.90px;font-size:23px;line-height:23px;color:#111;letter-spacing:0.079px;left:2568.85px;">Chilled</div><div style="left:440.00px;top:680.50px;width:2539.80px;height:37.00px;background:#fff;"></div><div style="left:440.00px;top:717.00px;width:2539.80px;height:2.00px;background:#000;"></div><div style="top:689.77px;font-size:23px;line-height:23px;color:#111;left:486.65px;">35657</div><div style="top:689.77px;font-size:23px;line-height:23px;color:#111;letter-spacing:-0.131px;left:578.65px;">Pork Tenderloin (PS)</div><div style="top:689.77px;font-size:23px;line-height:23px;color:#111;letter-spacing:0.276px;left:1230.55px;">Tenderloin -Head Off, Partially Skinned, Color 2-5</div><div style="top:689.77px;font-size:23px;line-height:23px;color:#111;letter-spacing:0.102px;left:1851.15px;">Cut</div><div style="top:689.77px;font-size:23px;line-height:23px;color:#111;letter-spacing:0.34px;left:2046.15px;">Tenderloin</div><div style="top:689.77px;font-size:23px;line-height:23px;color:#111;letter-spacing:0.07px;left:2273.35px;">Finished Goods</div><div style="top:689.77px;font-size:23px;line-height:23px;color:#111;letter-spacing:0.619px;left:2450.15px;">Approved</div><div style="top:689.77px;font-size:23px;line-height:23px;color:#111;letter-spacing:0.079px;left:2568.85px;">Chilled</div><div style="left:440.00px;top:718.50px;width:2539.80px;height:37.00px;background:#b5d8e6;"></div><div style="left:440.00px;top:755.00px;width:2539.80px;height:2.00px;background:#000;"></div><div style="top:727.64px;font-size:23px;line-height:23px;color:#111;left:486.65px;">35658</div><div style="top:727.64px;font-size:23px;line-height:23px;color:#111;letter-spacing:-0.049px;left:578.65px;">Fresh Pork Bone in Hams Long Shank NF</div><div style="top:727.64px;font-size:23px;line-height:23px;color:#111;letter-spacing:0.196px;left:1230.55px;">Ham - Bone in Long Shank Natural Fall</div><div style="top:727.64px;font-size:23px;line-height:23px;color:#111;letter-spacing:0.102px;left:1851.15px;">Cut</div><div style="top:727.64px;font-size:23px;line-height:23px;color:#111;letter-spacing:-0.081px;left:2046.15px;">Ham</div><div style="top:727.64px;font-size:23px;line-height:23px;color:#111;letter-spacing:0.07px;left:2273.35px;">Finished Goods</div><div style="top:727.64px;font-size:23px;line-height:23px;color:#111;letter-spacing:0.619px;left:2450.15px;">Approved</div><div style="top:727.64px;font-size:23px;line-height:23px;color:#111;letter-spacing:-1.199px;left:2568.85px;">Fresh</div><div style="left:440.00px;top:756.50px;width:2539.80px;height:36.00px;background:#fff;"></div><div style="left:440.00px;top:792.00px;width:2539.80px;height:2.00px;background:#000;"></div><div style="top:765.51px;font-size:23px;line-height:23px;color:#111;left:486.65px;">35659</div><div style="top:765.51px;font-size:23px;line-height:23px;color:#111;letter-spacing:-0.116px;left:578.65px;">Fresh Pork Bone in Hams Long Shank NF TP</div><div style="top:765.51px;font-size:23px;line-height:23px;color:#111;letter-spacing:0.196px;left:1230.55px;">Ham - Bone in Long Shank Natural Fall</div><div style="top:765.51px;font-size:23px;line-height:23px;color:#111;letter-spacing:0.102px;left:1851.15px;">Cut</div><div style="top:765.51px;font-size:23px;line-height:23px;color:#111;letter-spacing:-0.081px;left:2046.15px;">Ham</div><div style="top:765.51px;font-size:23px;line-height:23px;color:#111;letter-spacing:0.07px;left:2273.35px;">Finished Goods</div><div style="top:765.51px;font-size:23px;line-height:23px;color:#111;letter-spacing:0.619px;left:2450.15px;">Approved</div><div style="top:765.51px;font-size:23px;line-height:23px;color:#111;letter-spacing:-1.199px;left:2568.85px;">Fresh</div><div style="left:440.00px;top:793.50px;width:2539.80px;height:34.60px;background:#b5d8e6;"></div><div style="top:803.38px;font-size:23px;line-height:23px;color:#111;left:486.65px;">35660</div><div style="top:803.38px;font-size:23px;line-height:23px;color:#111;letter-spacing:0.163px;left:578.65px;">Pork Loin (1/8 Trim) - 2pcs</div><div style="top:803.38px;font-size:23px;line-height:23px;color:#111;letter-spacing:0.566px;left:1230.55px;">Loin - 1/8</div><div style="top:803.38px;font-size:23px;line-height:23px;color:#111;letter-spacing:0.102px;left:1851.15px;">Cut</div><div style="top:803.38px;font-size:23px;line-height:23px;color:#111;letter-spacing:-0.028px;left:2046.15px;">Loin</div><div style="top:803.38px;font-size:23px;line-height:23px;color:#111;letter-spacing:0.07px;left:2273.35px;">Finished Goods</div><div style="top:803.38px;font-size:23px;line-height:23px;color:#111;letter-spacing:0.619px;left:2450.15px;">Approved</div><div style="top:803.38px;font-size:23px;line-height:23px;color:#111;letter-spacing:-1.199px;left:2568.85px;">Fresh</div><div style="left:439.20px;top:225.50px;width:2.30px;height:602.10px;background:#000;"></div><div style="left:478.20px;top:225.50px;width:2.30px;height:602.10px;background:#000;"></div><div style="left:570.20px;top:225.50px;width:2.30px;height:602.10px;background:#000;"></div><div style="left:1226.20px;top:225.50px;width:2.30px;height:602.10px;background:#000;"></div><div style="left:1844.70px;top:225.50px;width:2.30px;height:602.10px;background:#000;"></div><div style="left:2038.20px;top:225.50px;width:2.30px;height:602.10px;background:#000;"></div><div style="left:2172.00px;top:225.50px;width:2.30px;height:602.10px;background:#000;"></div><div style="left:2266.20px;top:225.50px;width:2.30px;height:602.10px;background:#000;"></div><div style="left:2441.70px;top:225.50px;width:2.30px;height:602.10px;background:#000;"></div><div style="left:2561.70px;top:225.50px;width:2.30px;height:602.10px;background:#000;"></div><div style="left:2677.50px;top:225.50px;width:2.30px;height:602.10px;background:#000;"></div><div style="left:437.60px;top:224.50px;width:2.40px;height:603.10px;background:#6d6d6d;border-radius:3px 0 0 0;"></div><div style="left:441.45px;top:416.00px;width:36.80px;height:36.00px;border:2px solid #1d5fc4;"></div><div style="left:480.45px;top:416.00px;width:89.80px;height:36.00px;border:2px solid #1d5fc4;"></div><div style="left:569.95px;top:415.00px;width:658.80px;height:39.00px;border:3px solid #000;"></div><div style="left:1228.45px;top:416.00px;width:616.30px;height:36.00px;border:2px solid #1d5fc4;"></div><div style="left:1846.95px;top:416.00px;width:191.30px;height:36.00px;border:2px solid #1d5fc4;"></div><div style="left:2040.45px;top:416.00px;width:131.60px;height:36.00px;border:2px solid #1d5fc4;"></div><div style="left:2174.25px;top:416.00px;width:92.00px;height:36.00px;border:2px solid #1d5fc4;"></div><div style="left:2268.45px;top:416.00px;width:173.30px;height:36.00px;border:2px solid #1d5fc4;"></div><div style="left:2443.95px;top:416.00px;width:117.80px;height:36.00px;border:2px solid #1d5fc4;"></div><div style="left:2563.95px;top:416.00px;width:113.60px;height:36.00px;border:2px solid #1d5fc4;"></div><div style="left:2979.80px;top:182.30px;width:32.80px;height:645.30px;background:#f0f0f0;"></div><div style="left:2979.80px;top:774.00px;width:32.80px;height:15.70px;background:#cdcdcd;"></div><svg style="left:2987.5px;top:240px" width="17" height="10" fill="none" stroke="#9a9a9a" stroke-width="2"><path d="M1 9L8.5 1.5L16 9"/></svg><svg style="left:2987.5px;top:807px" width="17" height="10" fill="none" stroke="#9a9a9a" stroke-width="2"><path d="M1 1L8.5 8.5L16 1"/></svg><div style="top:846.93px;font-size:23px;line-height:23px;color:#000;font-weight:bold;left:436.40px;">Columns:</div><svg style="left:561.2px;top:840.9px" width="26" height="26"><circle cx="13" cy="13" r="11.3" fill="#fff" stroke="#444" stroke-width="1.5"/><circle cx="13" cy="13" r="5.9" fill="#222"/></svg><div style="top:844.53px;font-size:23px;line-height:23px;color:#000;letter-spacing:-0.438px;left:599.40px;">General</div><svg style="left:701px;top:840.9px" width="26" height="26"><circle cx="13" cy="13" r="11.3" fill="#fff" stroke="#444" stroke-width="1.5"/></svg><div style="top:844.53px;font-size:23px;line-height:23px;color:#000;left:739.20px;">Packaging</div><div style="top:848.70px;font-size:22.8px;line-height:22.8px;color:#000;right:3.00px;font-style:italic;">Total Products Listed: 3786</div><div style="left:426.40px;top:929.40px;width:2588.20px;height:756.40px;background:#fff;border:2px solid #acacac;"></div><div class="tab" style="left:552.80px;top:890.20px;width:96.90px;height:41.00px;"></div><div style="top:900.33px;font-size:23px;line-height:23px;color:#111;letter-spacing:0.746px;left:564.30px;">Weight</div><div class="tab" style="left:649.70px;top:890.20px;width:131.95px;height:41.00px;"></div><div style="top:900.33px;font-size:23px;line-height:23px;color:#111;letter-spacing:-0.078px;left:662.78px;">Packaging</div><div class="tab" style="left:781.65px;top:890.20px;width:106.00px;height:41.00px;"></div><div style="top:900.33px;font-size:23px;line-height:23px;color:#111;letter-spacing:0.023px;left:794.80px;">Storage</div><div class="tab" style="left:887.65px;top:890.20px;width:69.90px;height:41.00px;"></div><div style="top:900.33px;font-size:23px;line-height:23px;color:#111;letter-spacing:-2.222px;left:900.40px;">MES</div><div class="tab" style="left:957.55px;top:890.20px;width:137.75px;height:41.00px;"></div><div style="top:900.33px;font-size:23px;line-height:23px;color:#111;letter-spacing:-0.644px;left:971.02px;">MES Fields</div><div class="tab" style="left:1095.30px;top:890.20px;width:97.90px;height:41.00px;"></div><div style="top:900.33px;font-size:23px;line-height:23px;color:#111;letter-spacing:-0.255px;left:1107.30px;">Carlisle</div><div class="tab" style="left:1193.20px;top:890.20px;width:155.50px;height:41.00px;"></div><div style="top:900.33px;font-size:23px;line-height:23px;color:#111;letter-spacing:0.081px;left:1206.45px;">Box Delivery</div><div class="tab" style="left:1348.70px;top:890.20px;width:161.75px;height:41.00px;"></div><div style="top:900.33px;font-size:23px;line-height:23px;color:#111;letter-spacing:-0.016px;left:1361.12px;">Custom Spec</div><div class="tab" style="left:1510.45px;top:890.20px;width:155.75px;height:41.00px;"></div><div style="top:900.33px;font-size:23px;line-height:23px;color:#111;letter-spacing:-0.116px;left:1523.62px;">Overall Spec</div><div class="tab" style="left:1666.20px;top:890.20px;width:116.50px;height:41.00px;"></div><div style="top:900.33px;font-size:23px;line-height:23px;color:#111;letter-spacing:0.053px;left:1680.00px;">Planning</div><div class="tab" style="left:1782.70px;top:890.20px;width:137.50px;height:41.00px;"></div><div style="top:900.33px;font-size:23px;line-height:23px;color:#111;letter-spacing:0.285px;left:1795.35px;">Comments</div><div class="tab" style="left:1920.20px;top:890.20px;width:129.45px;height:41.00px;"></div><div style="top:900.33px;font-size:23px;line-height:23px;color:#111;letter-spacing:0.195px;left:1932.77px;">Calculator</div><div class="tab" style="left:2049.65px;top:890.20px;width:232.95px;height:41.00px;"></div><div style="top:900.33px;font-size:23px;line-height:23px;color:#111;letter-spacing:0.522px;left:2061.82px;">Outstanding Orders</div><div class="tab" style="left:2282.60px;top:890.20px;width:203.00px;height:41.00px;"></div><div style="top:900.33px;font-size:23px;line-height:23px;color:#111;letter-spacing:0.311px;left:2297.25px;">File Attachments</div><div style="left:426.40px;top:886.00px;width:127.40px;height:46.00px;background:#fff;border:2px solid #acacac;border-bottom:none;"></div><div style="top:898.53px;font-size:23px;line-height:23px;color:#111;letter-spacing:-0.261px;left:443.70px;">Base Info</div><div style="top:952.63px;font-size:23px;line-height:23px;color:#111;font-weight:bold;letter-spacing:-0.4px;right:2297.80px;">Code</div><div style="left:730.30px;top:940.40px;width:219.70px;height:45.10px;background:#fff;border:2px solid #d6d6d6;"></div><div style="top:948.73px;font-size:23px;line-height:23px;color:#8c8c8c;letter-spacing:0.083px;left:736.30px;">35650</div><div style="top:1004.73px;font-size:23px;line-height:23px;color:#111;letter-spacing:0.375px;right:2297.03px;">Description</div><div style="left:730.30px;top:992.50px;width:539.70px;height:44.80px;background:#fff;border:2px solid #abadb3;"></div><div style="top:1000.33px;font-size:23px;line-height:23px;color:#111;letter-spacing:-0.343px;left:736.30px;">Pork Back Rib</div><div style="top:1058.63px;font-size:23px;line-height:23px;color:#111;letter-spacing:0.438px;right:2296.96px;">Production Area</div><div style="left:730.30px;top:1046.40px;width:219.70px;height:44.60px;background:#fff;border:2px solid #abadb3;"></div><div style="top:1054.23px;font-size:23px;line-height:23px;color:#111;letter-spacing:0.202px;left:736.30px;">Cut</div><div style="top:1110.53px;font-size:23px;line-height:23px;color:#111;letter-spacing:0.311px;right:2297.09px;">Production Line</div><div style="left:730.30px;top:1098.30px;width:219.70px;height:44.90px;background:#fff;border:2px solid #abadb3;"></div><div style="top:1106.13px;font-size:23px;line-height:23px;color:#111;letter-spacing:0.139px;left:736.30px;">Loin</div><div style="top:1164.63px;font-size:23px;line-height:23px;color:#111;letter-spacing:-0.124px;right:2297.52px;">Specific Break</div><div style="left:730.30px;top:1152.40px;width:219.70px;height:44.70px;background:#fff;border:2px solid #abadb3;"></div><div style="top:1218.43px;font-size:23px;line-height:23px;color:#111;font-weight:bold;letter-spacing:-0.37px;right:2297.77px;">Cut Spec</div><div style="left:730.30px;top:1206.20px;width:539.70px;height:45.00px;background:#f0f0f0;border:2px solid #dcdcdc;"></div><div style="top:1218.03px;font-size:23px;line-height:23px;color:#111;letter-spacing:-0.635px;left:742.60px;">Back Rib</div><svg style="left:1244.8px;top:1224.2px" width="12" height="8" fill="none" stroke="#b5b5b5" stroke-width="1.8"><path d="M1 1L6 6.2L11 1"/></svg><div style="top:1270.53px;font-size:23px;line-height:23px;color:#111;letter-spacing:0.12px;right:2297.28px;">Planning Type</div><div style="left:730.30px;top:1258.30px;width:219.70px;height:44.70px;background:#fff;border:2px solid #abadb3;"></div><div style="top:1266.13px;font-size:23px;line-height:23px;color:#111;letter-spacing:-0.635px;left:736.30px;">Back Rib</div><div style="top:1324.53px;font-size:23px;line-height:23px;color:#111;letter-spacing:-0.188px;right:2297.59px;">Sales Category</div><div style="left:730.30px;top:1312.30px;width:219.70px;height:44.70px;background:#fff;border:2px solid #abadb3;"></div><div style="top:1320.13px;font-size:23px;line-height:23px;color:#111;letter-spacing:-0.635px;left:736.30px;">Back Rib</div><div style="top:1376.53px;font-size:23px;line-height:23px;color:#111;letter-spacing:0.036px;right:2297.36px;">Sales Dashboard Category</div><div style="left:730.30px;top:1364.30px;width:219.70px;height:44.90px;background:#fff;border:2px solid #abadb3;"></div><div style="top:1372.13px;font-size:23px;line-height:23px;color:#111;letter-spacing:-0.635px;left:736.30px;">Back Rib</div><div style="top:1430.23px;font-size:23px;line-height:23px;color:#111;font-weight:bold;letter-spacing:0.139px;right:2297.26px;">Type</div><div style="left:730.30px;top:1418.00px;width:219.70px;height:45.00px;background:#f0f0f0;border:2px solid #dcdcdc;"></div><div style="top:1429.83px;font-size:23px;line-height:23px;color:#111;letter-spacing:0.07px;left:742.60px;">Finished Goods</div><svg style="left:924.8px;top:1436.0px" width="12" height="8" fill="none" stroke="#b5b5b5" stroke-width="1.8"><path d="M1 1L6 6.2L11 1"/></svg><div style="top:1482.53px;font-size:23px;line-height:23px;color:#111;font-weight:bold;letter-spacing:-0.359px;right:2297.76px;">Status</div><div style="left:730.30px;top:1470.30px;width:219.70px;height:45.00px;background:#f0f0f0;border:2px solid #dcdcdc;"></div><div style="top:1482.13px;font-size:23px;line-height:23px;color:#111;letter-spacing:0.633px;left:742.60px;">Approved</div><svg style="left:924.8px;top:1488.3px" width="12" height="8" fill="none" stroke="#b5b5b5" stroke-width="1.8"><path d="M1 1L6 6.2L11 1"/></svg><div style="top:952.43px;font-size:23px;line-height:23px;color:#111;letter-spacing:0.495px;left:959.60px;">(4-6 digits)</div><div style="top:952.43px;font-size:23px;line-height:23px;color:#111;letter-spacing:-0.065px;left:1279.50px;">GTIN-14</div><div style="left:1378.20px;top:940.10px;width:299.10px;height:44.90px;background:#fff;border:1px solid #7f8186;"></div><div style="top:947.93px;font-size:23px;line-height:23px;color:#111;letter-spacing:0.062px;left:1384.00px;">96283290231881</div><div style="left:732.20px;top:1532.10px;width:28.20px;height:25.60px;background:#e6e6e6;border:2px solid #bcbcbc;"></div><div style="top:1533.93px;font-size:23px;line-height:23px;color:#111;letter-spacing:0.055px;left:770.20px;">Uses CutLogix Label Printer</div><div style="left:732.20px;top:1571.90px;width:28.20px;height:25.60px;background:#e6e6e6;border:2px solid #bcbcbc;"></div><div style="top:1573.73px;font-size:23px;line-height:23px;color:#111;letter-spacing:0.276px;left:770.20px;">Waste Product</div><div style="left:732.20px;top:1612.00px;width:28.20px;height:25.60px;background:#e6e6e6;border:2px solid #bcbcbc;"></div><div style="top:1613.83px;font-size:23px;line-height:23px;color:#111;letter-spacing:0.53px;left:770.20px;">Do Not Include In Production Data</div><div style="top:1298.03px;font-size:23px;line-height:23px;color:#111;letter-spacing:0.252px;left:2246.40px;">No Label Available</div><div style="left:0.00px;top:1688.70px;width:380.60px;height:1.50px;background:#fff;"></div>
</body></html>
